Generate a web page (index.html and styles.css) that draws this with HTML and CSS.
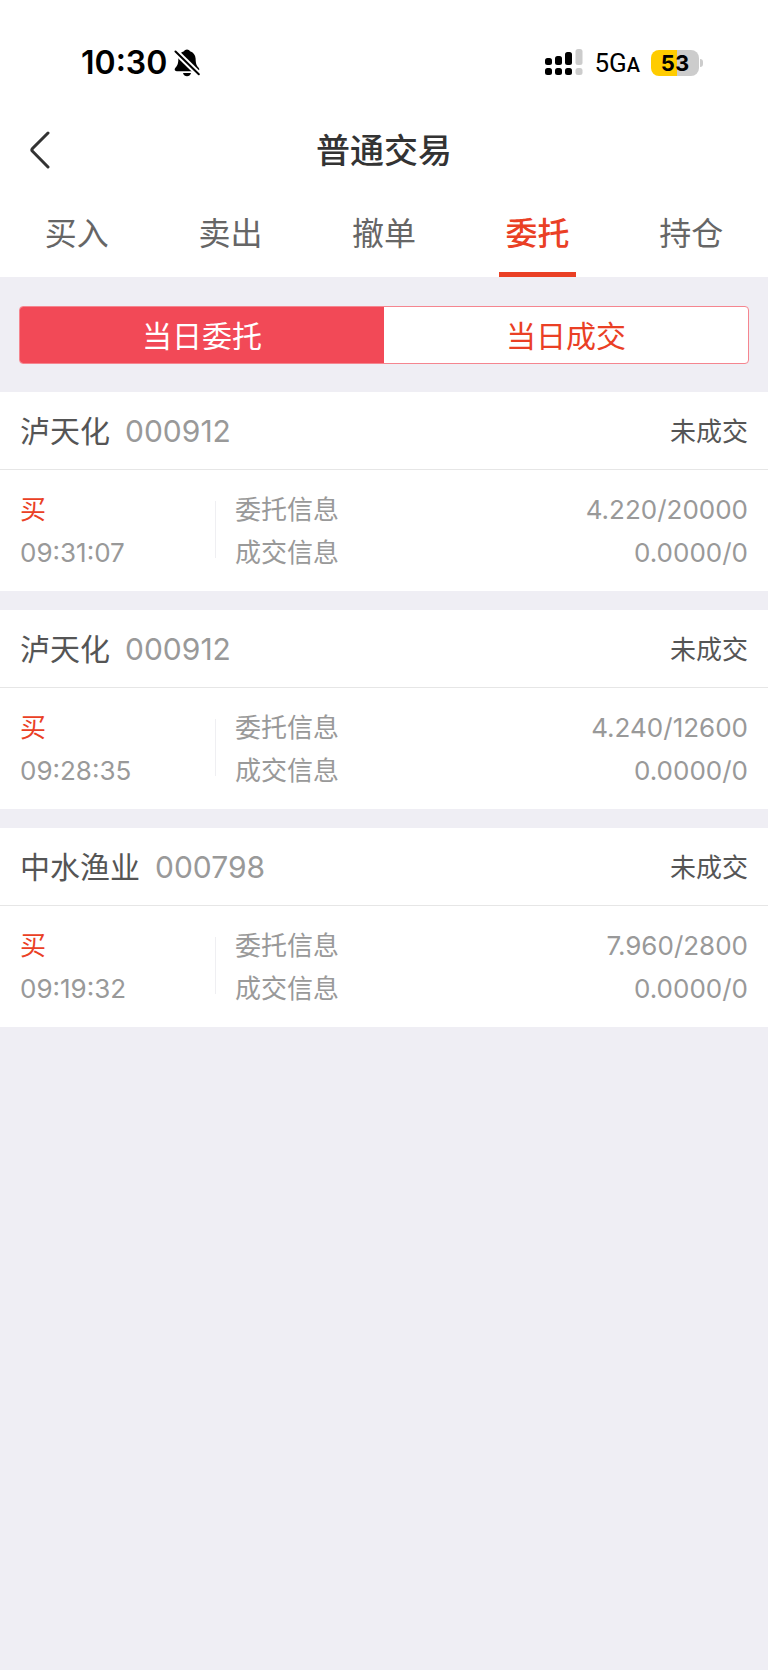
FILE: index.html
```html
<!DOCTYPE html>
<html lang="zh-CN">
<head>
<meta charset="utf-8">
<meta name="viewport" content="width=device-width, initial-scale=1">
<title>普通交易</title>
<link rel="stylesheet" href="styles.css">
</head>
<body>
<header class="top">
  <div class="status">
    <div class="status-left">
      <span class="clock">10:30</span>
      <svg class="bell" width="26" height="28" viewBox="0 0 26 28" aria-hidden="true">
        <path d="M13 0.5C14.4 0.5 15.4 1.2 16 2.3C19.4 3.4 21.4 6 21.6 9.6C21.8 14.6 22.3 16.2 24.4 18.6C26 20.4 25.3 22.2 23.3 22.2H2.7C0.7 22.2 0 20.4 1.6 18.6C3.7 16.2 4.2 14.6 4.4 9.6C4.6 6 6.6 3.4 10 2.3C10.6 1.2 11.6 0.5 13 0.5Z"/>
        <path d="M9 24H17C16.4 26.2 15 27.3 13 27.3S9.600 26.200 9 24Z"/>
        <path class="bell-gap" d="M0.500 1.500L25.500 26"/>
        <path class="bell-slash" d="M1.500 2.500L24.800 25.300"/>
      </svg>
    </div>
    <div class="status-right">
      <svg width="38" height="28" viewBox="0 0 38 28" aria-hidden="true">
        <rect x="0" y="9" width="7" height="7" rx="2.500"/>
        <rect x="10" y="7" width="7" height="9" rx="2.500"/>
        <rect x="20" y="3" width="7" height="13" rx="2.500"/>
        <rect class="dim" x="30.500" y="0" width="7" height="16" rx="2.500"/>
        <rect x="0" y="19" width="7" height="7" rx="2.500"/>
        <rect x="10" y="19" width="7" height="7" rx="2.500"/>
        <rect x="20" y="19" width="7" height="7" rx="2.500"/>
        <rect class="dim" x="30.500" y="19" width="7" height="7" rx="2.500"/>
      </svg>
      <span class="network">5G<span class="network-sub">A</span></span>
      <span class="battery"><span class="battery-body">53</span><span class="battery-tip"></span></span>
    </div>
  </div>
  <div class="titlebar">
    <button class="back" type="button" aria-label="返回">
      <svg width="22" height="38" viewBox="0 0 22 38" aria-hidden="true"><path d="M18 2L2.500 17.500Q1.200 19 2.500 20.300L18 36"/></svg>
    </button>
    <h1 class="title">普通交易</h1>
  </div>
  <nav class="tabs">
    <a class="tab" href="#">买入</a>
    <a class="tab" href="#">卖出</a>
    <a class="tab" href="#">撤单</a>
    <a class="tab tab-active" href="#" aria-current="page">委托</a>
    <a class="tab" href="#">持仓</a>
  </nav>
</header>
<main>
  <div class="segments">
    <button class="segment segment-active" type="button">当日委托</button>
    <button class="segment" type="button">当日成交</button>
  </div>
  <section class="orders">
    <article class="order">
      <div class="order-head"><h2 class="name">泸天化</h2><span class="code">000912</span><span class="state">未成交</span></div>
      <div class="order-body">
        <div class="side"><div class="buy">买</div><div>09:31:07</div></div>
        <div class="info">
          <div class="row"><span>委托信息</span><span>4.220/20000</span></div>
          <div class="row"><span>成交信息</span><span>0.0000/0</span></div>
        </div>
      </div>
    </article>
    <article class="order">
      <div class="order-head"><h2 class="name">泸天化</h2><span class="code">000912</span><span class="state">未成交</span></div>
      <div class="order-body">
        <div class="side"><div class="buy">买</div><div>09:28:35</div></div>
        <div class="info">
          <div class="row"><span>委托信息</span><span>4.240/12600</span></div>
          <div class="row"><span>成交信息</span><span>0.0000/0</span></div>
        </div>
      </div>
    </article>
    <article class="order">
      <div class="order-head"><h2 class="name">中水渔业</h2><span class="code">000798</span><span class="state">未成交</span></div>
      <div class="order-body">
        <div class="side"><div class="buy">买</div><div>09:19:32</div></div>
        <div class="info">
          <div class="row"><span>委托信息</span><span>7.960/2800</span></div>
          <div class="row"><span>成交信息</span><span>0.0000/0</span></div>
        </div>
      </div>
    </article>
  </section>
</main>
</body>
</html>
```
FILE: styles.css
```css
* { box-sizing: border-box; }

body {
  margin: 0;
  min-height: 100vh;
  background: #efeef4;
  color: #999;
  font-family: Inter, "Noto Sans CJK SC", sans-serif;
  font-size: 26px;
}

button { font: inherit; padding: 0; border: 0; background: none; cursor: pointer; }
a { color: inherit; text-decoration: none; }
h1, h2 { margin: 0; }
svg { display: block; }

.top { background: #fff; }

.status {
  display: flex;
  justify-content: space-between;
  align-items: center;
  height: 116px;
  padding: 10px 65px 0 81px;
  color: #000;
}
.status-left, .status-right { display: flex; align-items: center; }
.status-left { gap: 7px; }
.status-right { gap: 11px; }
.clock { font-size: 32px; line-height: 40px; font-weight: 600; }
.bell-gap { stroke: #fff; stroke-width: 6; }
.bell-slash { stroke: #000; stroke-width: 2; stroke-linecap: round; }
.dim { fill: #ccc; }
.network { padding-top: 2px; font-family: Roboto, sans-serif; font-size: 26px; line-height: 32px; }
.network-sub { font-size: 20px; font-weight: 500; }
.battery { display: flex; align-items: center; gap: 1px; }
.battery-body {
  width: 48px;
  border-radius: 8px;
  background: linear-gradient(90deg, #fc0 54%, #ccc 54%);
  font-size: 22px;
  line-height: 26px;
  font-weight: 700;
  text-align: center;
}
.battery-tip { width: 3px; height: 8px; border-radius: 0 4px 4px 0; background: #ccc; }

.titlebar {
  display: grid;
  grid-template-columns: 80px 1fr 80px;
  align-items: center;
  height: 68px;
}
.back { padding: 0 0 0 30px; }
.back path { fill: none; stroke: #333; stroke-width: 3; stroke-linecap: round; }
.title {
  padding-top: 2px;
  color: #333;
  font-size: 34px;
  line-height: 48px;
  font-weight: 500;
  text-align: center;
}

.tabs { display: flex; height: 93px; color: #666; font-size: 32px; }
.tab {
  position: relative;
  flex: 1;
  line-height: 100px;
  text-align: center;
}
.tab-active { color: #ea4025; font-weight: 500; }
.tab-active::after {
  content: "";
  position: absolute;
  left: 25%;
  bottom: 0;
  width: 50%;
  height: 5px;
  background: #ea4025;
}

.segments {
  display: flex;
  margin: 29px 19px 28px;
  border: 1px solid #f5858f;
  border-radius: 4px;
  background: #fff;
  overflow: hidden;
}
.segment { flex: 1; padding-top: 2px; color: #ea4025; font-size: 30px; line-height: 54px; }
.segment-active { background: #f24957; color: #fff; }

.orders { display: grid; gap: 19px; }
.order { background: #fff; }
.order-head {
  display: flex;
  align-items: center;
  height: 78px;
  padding: 0 20px;
  border-bottom: 1px solid #e6e6e6;
}
.name { padding-bottom: 4px; color: #555; font-size: 30px; font-weight: 400; }
.code { margin-left: 15px; font-size: 30px; }
.state { margin-left: auto; padding-bottom: 2px; color: #555; }

.order-body {
  display: grid;
  grid-template-columns: 28% 1fr;
  padding: 18px 0 17px;
  line-height: 43px;
}
.side { padding-left: 20px; }
.buy { color: #ea4025; }
.info { position: relative; padding: 0 20px; }
.info::before {
  content: "";
  position: absolute;
  left: 0;
  top: 13px;
  bottom: 16px;
  width: 1px;
  background: #efeff2;
}
.row { display: flex; justify-content: space-between; }
```
